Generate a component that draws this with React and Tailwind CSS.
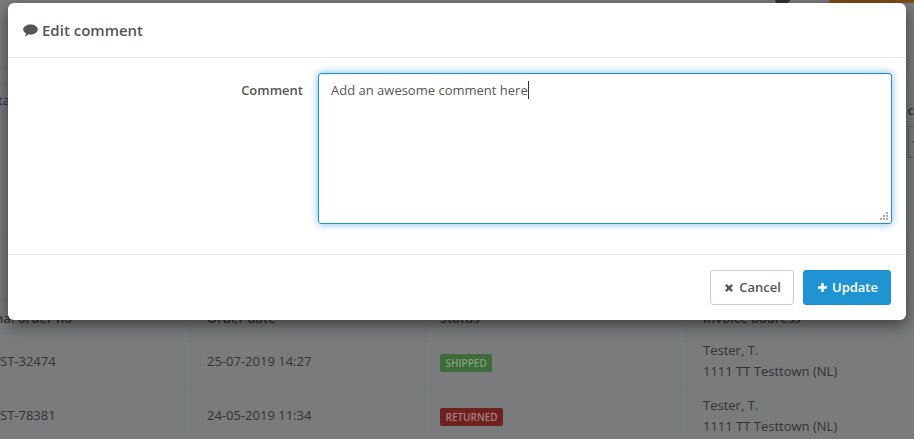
import React from 'react';

const font = "font-['Open_Sans','Noto_Sans',sans-serif]";

const OrderRow = ({orderNo, date, badge, badgeClass, textOffset}) => (
    <div className="flex h-[55px] border-b border-[#6f7a7c] text-[13px] text-[#333]">
        <div className={`w-[192px] border-r border-[#6f7a7c] flex items-center ${textOffset}`}>{orderNo}</div>
        <div className={`w-[233px] border-r border-[#6f7a7c] flex items-center pl-[15px] ${textOffset}`}>{date}</div>
        <div className="w-[263px] border-r border-[#6f7a7c] flex items-center pl-[15px]">
            <span className={`h-[18px] px-[5.5px] rounded-[2px] text-[10px] font-semibold leading-[18px] ${badgeClass}`}>{badge}</span>
        </div>
        <div className="pl-[15px] flex flex-col justify-center leading-[21px]">
            <span>Tester, T.</span>
            <span>1111 TT Testtown (NL)</span>
        </div>
    </div>
);

const App = () => {
    return (
        <div className={`relative w-[914px] h-[439px] overflow-hidden bg-[#797b7c] ${font}`}>
            {/* page behind the overlay */}
            <div className="h-[3px] flex justify-end">
                <div className="w-[85px] bg-[#7d4d17]" />
            </div>
            <div className="h-[20px] border-b border-[#6f7a7c]" />
            <div className="h-[45px] border-b border-[#6f7a7c]" />
            <div className="h-[16px] border-b border-[#6f7a7c]" />
            <div className="h-[35px] border-b border-[#6f7a7c] flex justify-between text-[13px] text-[#333]">
                <span className="-ml-[2px] self-center">ta</span>
                <span className="font-semibold self-end leading-[16px]">c</span>
            </div>
            <div className="h-[120px] border-b border-[#6f7a7c] flex justify-end items-start pt-[7px]">
                <div className="w-[6px] h-[32px] border border-r-0 border-[#5f6263] flex items-center pl-[3px]">
                    <svg width="4" height="4" viewBox="0 0 4 4" fill="none" stroke="#444" className="shrink-0"><path d="M0 1L2 3L4 1" /></svg>
                </div>
            </div>
            <div className="h-[62px] border-b border-[#6f7a7c]" />
            <div className="flex h-[33px] border-b border-[#6f7a7c] items-center text-[13px] font-semibold text-[#333]">
                <div className="w-[192px] h-full flex items-center border-r border-[#6f7a7c] whitespace-nowrap pt-[3px]"><span className="-ml-[5px]">nal order no</span></div>
                <div className="w-[233px] h-full flex items-center border-r border-[#6f7a7c] pl-[15px] pt-[3px]">Order date</div>
                <div className="w-[263px] h-full flex items-center border-r border-[#6f7a7c] pl-[15px] pt-[3px]">Status</div>
                <div className="pl-[15px] pt-[3px]">Invoice address</div>
            </div>
            <OrderRow orderNo="ST-32474" date="25-07-2019 14:27" badge="SHIPPED" textOffset="pt-[2px]" badgeClass="mt-[4px] bg-[#3e6c38] text-[#84a07f]" />
            <OrderRow orderNo="ST-78381" date="24-05-2019 11:34" badge="RETURNED" textOffset="" badgeClass="mt-[2px] bg-[#6e211d] text-[#a6807e]" />

            <div className="absolute left-[775px] -top-[4px] w-[15px] h-[7px] rounded-full bg-[#333]" />

            {/* modal */}
            <div className="absolute left-[8px] top-[3px] w-[898px] h-[317px] bg-white rounded-[6px] shadow-[0_5px_15px_rgba(0,0,0,0.5)] flex flex-col text-[#555]">
                <div className="h-[55px] border-b border-[#e5e5e5] flex items-center pl-[15px] text-[15px] font-semibold">
                    <svg width="15" height="13" viewBox="0 0 15 13" className="mr-[4px] mt-[1px]" fill="#555">
                        <path d="M7.6 0.5C11.5 0.5 14.8 2.6 14.8 5.5C14.8 8.3 11.5 10.5 7.6 10.5C6.9 10.5 6.2 10.4 5.6 10.3C4.6 11.3 3.3 12.1 1.6 12.3C2.3 11.5 3 10.6 3.2 9.4C1.3 8.5 0.2 7.1 0.2 5.5C0.2 2.6 3.6 0.5 7.6 0.5Z" />
                    </svg>
                    Edit comment
                </div>
                <div className="flex-1 flex pt-[15px] pl-[15px]">
                    <label htmlFor="comment" className="w-[280px] text-right text-[13px] font-semibold leading-[34px]">Comment</label>
                    <div className="relative ml-[15px] w-[574px] h-[151px] border border-[#2090d0] rounded-[3px] shadow-[inset_0_1px_1px_rgba(0,0,0,0.075),0_0_8px_rgba(32,144,208,0.6)] pl-[12px] pt-[6px] text-[13px] leading-[20px]">
                        <span className="border-r border-[#333]">Add an awesome comment here</span>
                        <svg width="9" height="9" viewBox="0 0 9 9" className="absolute right-[2px] bottom-[2px]" fill="#aaa">
                            <rect x="6" y="0" width="2" height="2" />
                            <rect x="3" y="3" width="2" height="2" />
                            <rect x="6" y="3" width="2" height="2" />
                            <rect x="0" y="6" width="2" height="2" />
                            <rect x="3" y="6" width="2" height="2" />
                            <rect x="6" y="6" width="2" height="2" />
                        </svg>
                    </div>
                </div>
                <div className="h-[66px] border-t border-[#e5e5e5] flex justify-end items-start pt-[15px] pr-[15px] gap-[9px] text-[13px] font-semibold">
                    <button type="button" className="w-[84px] h-[35px] border border-[#ccc] rounded-[3px] bg-white flex items-center justify-center gap-[6px] pl-[2px]">
                        <svg width="8" height="8" viewBox="0 0 9 9" stroke="#555" strokeWidth="2.6"><path d="M1 1L8 8M8 1L1 8" /></svg>
                        Cancel
                    </button>
                    <button type="button" className="w-[88px] h-[35px] border border-[#1f8dd0] rounded-[3px] bg-[#2093d3] text-white flex items-center justify-center gap-[5px] pl-[2px]">
                        <svg width="9" height="9" viewBox="0 0 9 9" stroke="#fff" strokeWidth="2.4"><path d="M4.5 0V9M0 4.5H9" /></svg>
                        Update
                    </button>
                </div>
            </div>
        </div>
    );
};

export default App;
